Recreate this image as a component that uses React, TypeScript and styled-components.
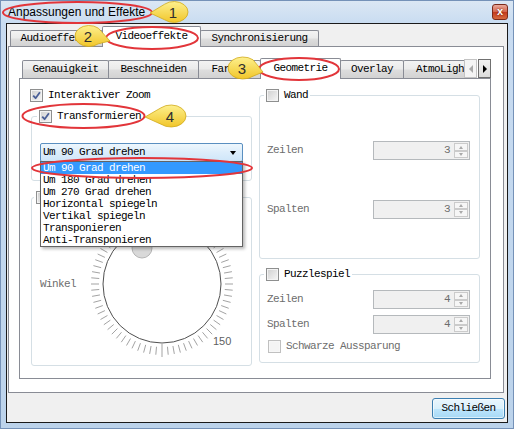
import React from 'react'
import styled, { createGlobalStyle, css } from 'styled-components'

const mono = `"Liberation Mono", "DejaVu Sans Mono", monospace`
const sans = `"Liberation Sans", Arial, sans-serif`

const edge = '#898c95'
const grayText = '#6d6d6d'

const monoText = css`
  font-family: ${mono};
  font-size: 11px;
  letter-spacing: -0.6px;
  line-height: 13px;
  white-space: nowrap;
`

const GlobalStyle = createGlobalStyle`
  html, body { margin: 0; padding: 0; background: #fff; }
  body { overflow: hidden; }
  * { box-sizing: border-box; }
`

const Window = styled.div`
  position: relative;
  width: 514px;
  height: 429px;
  border: 1px solid #7592b8;
  background: linear-gradient(180deg, #dbe7f4 0, #c9dcf1 22px, #bcd3eb 100%);
  padding: 0 5px 5px 5px;
  display: flex;
  flex-direction: column;
`

const TitleBar = styled.div`
  height: 22px;
  flex: none;
  display: flex;
  align-items: center;
  padding-left: 2px;
`

const Title = styled.span`
  font-family: ${sans};
  font-size: 12px;
  color: #000;
`

const CloseButton = styled.span`
  margin-left: auto;
  width: 16px;
  height: 16px;
  border: 1px solid #7a2a1a;
  border-radius: 3px;
  background: linear-gradient(#e9a99a, #d4644b 50%, #c2391d 51%, #d66a3e);
  color: #fff;
  font-family: ${sans};
  font-weight: bold;
  font-size: 11px;
  line-height: 13px;
  text-align: center;
  text-shadow: 0 0 2px #5a1000;
`

const Client = styled.div`
  flex: 1;
  border: 1px solid #1a1a1a;
  background: #f0f0f0;
  display: flex;
  flex-direction: column;
`

const TabWidget = styled.div<{ $margin: string }>`
  flex: 1;
  display: flex;
  flex-direction: column;
  margin: ${(p) => p.$margin};
`

const TabStrip = styled.div`
  position: relative;
  z-index: 1;
  height: 23px;
  margin-bottom: -1px;
  display: flex;
  align-items: flex-end;
`

const TabsViewport = styled.div<{ $pad: number }>`
  flex: 1;
  height: 100%;
  overflow: hidden;
  display: flex;
  align-items: flex-end;
  padding-left: ${(p) => p.$pad}px;
`

const Tab = styled.div<{ $active?: boolean; $w: number; $h: number }>`
  position: relative;
  flex: none;
  width: ${(p) => p.$w}px;
  height: ${(p) => p.$h}px;
  margin-bottom: ${(p) => (p.$active ? 0 : 1)}px;
  border: 1px solid ${edge};
  border-bottom: none;
  border-radius: 2px 2px 0 0;
  background: ${(p) =>
    p.$active
      ? '#fff'
      : 'linear-gradient(#f3f3f3, #ebebeb 45%, #dddddd 55%, #d2d2d2)'};
  z-index: ${(p) => (p.$active ? 2 : 1)};
  display: flex;
  align-items: center;
  justify-content: center;
  padding-bottom: ${(p) => (p.$active ? 2 : 0)}px;
  color: #000;
  ${monoText}

  & + & {
    margin-left: -1px;
  }
`

const Scroller = styled.div`
  flex: none;
  display: flex;
  gap: 1px;
  margin-bottom: 1px;
`

const ArrowButton = styled.span<{ $dir: 'left' | 'right'; $off?: boolean }>`
  width: 13px;
  height: 19px;
  border: 1px solid ${(p) => (p.$off ? '#c3c3c3' : '#707070')};
  background: ${(p) => (p.$off ? '#f4f4f4' : 'linear-gradient(#f2f2f2, #dcdcdc)')};
  display: flex;
  align-items: center;
  justify-content: center;

  &::after {
    content: '';
    border-top: 4px solid transparent;
    border-bottom: 4px solid transparent;
    ${(p) =>
      p.$dir === 'left'
        ? `border-right: 4px solid ${p.$off ? '#a8a8a8' : '#000'};`
        : `border-left: 4px solid ${p.$off ? '#a8a8a8' : '#000'};`}
  }
`

const TabPanel = styled.div<{ $pad: string }>`
  flex: 1;
  border: 1px solid ${edge};
  background: #fff;
  padding: ${(p) => p.$pad};
  display: flex;
  flex-direction: column;
`

const PageBody = styled.div`
  display: flex;
  gap: 7px;
  padding: 10px 10px 0 10px;
`

const Column = styled.div<{ $w: number }>`
  width: ${(p) => p.$w}px;
  flex: none;
  display: flex;
  flex-direction: column;
`

const CheckRow = styled.label<{ $shift?: number }>`
  display: flex;
  align-items: center;
  gap: 5px;
  height: 13px;
  margin-left: ${(p) => p.$shift ?? 0}px;
`

const Box = styled.span<{ $disabled?: boolean }>`
  flex: none;
  width: 13px;
  height: 13px;
  border: 1px solid ${(p) => (p.$disabled ? '#c0c0c0' : '#8e8f8f')};
  background: ${(p) =>
    p.$disabled ? '#f4f4f4' : 'linear-gradient(135deg, #cfcfcf, #f6f6f6)'};
  box-shadow: inset 0 0 0 1px ${(p) => (p.$disabled ? '#f7f7f7' : '#f3f3f3')};
  display: flex;
  align-items: center;
  justify-content: center;
`

const Text = styled.span<{ $disabled?: boolean }>`
  color: ${(p) => (p.$disabled ? grayText : '#000')};
  ${monoText}
`

const GroupBox = styled.fieldset<{ $top?: number; $left?: number }>`
  margin: ${(p) => p.$top ?? 0}px 0 0 ${(p) => p.$left ?? 0}px;
  padding: 0;
  min-width: 0;
  border: 1px solid #d5dfe5;
  border-radius: 3px;
`

const Legend = styled.legend<{ $indent: number }>`
  margin-left: ${(p) => p.$indent}px;
  padding: 0 2px;
`

const TransformBody = styled.div`
  padding: 20px 8px 18px 8px;
`

const ComboWrap = styled.div`
  position: relative;
`

const Combo = styled.div`
  height: 19px;
  border: 1px solid #5a8fc0;
  border-radius: 2px;
  background: linear-gradient(#eef7fd, #dcedfb 50%, #cfe6f9);
  display: flex;
  align-items: center;
  padding: 0 6px 0 2px;
  ${monoText}

  &::after {
    content: '';
    margin-left: auto;
    border-top: 4px solid #000;
    border-left: 3.5px solid transparent;
    border-right: 3.5px solid transparent;
  }
`

const Popup = styled.ul`
  position: absolute;
  top: 18px;
  left: 0;
  width: 203px;
  margin: 0;
  padding: 0;
  list-style: none;
  border: 1px solid #646464;
  background: #fff;
  box-shadow: 2px 2px 3px rgba(0, 0, 0, 0.28);
  z-index: 10;
`

const PopupItem = styled.li<{ $selected?: boolean }>`
  height: 12px;
  padding-left: 2px;
  ${monoText}
  line-height: 12px;
  background: ${(p) => (p.$selected ? '#3399ff' : 'transparent')};
  color: ${(p) => (p.$selected ? '#fff' : '#000')};
`

const DialBody = styled.div`
  display: flex;
  align-items: center;
  padding: 5px 0 6px 8px;
`

const DialLabel = styled(Text)`
  width: 47px;
  flex: none;
`

const WallBody = styled.div`
  height: 156px;
  display: flex;
  flex-direction: column;
  justify-content: space-evenly;
  padding: 0 9px 0 7px;
`

const PuzzleBody = styled.div`
  display: flex;
  flex-direction: column;
  gap: 6px;
  padding: 9px 9px 9px 7px;
`

const SpinRow = styled.div`
  height: 19px;
  display: flex;
  align-items: center;
  justify-content: space-between;
`

const SpinBox = styled.div`
  width: 97px;
  height: 19px;
  border: 1px solid #b5b9bc;
  background: #f0f0f0;
  display: flex;
`

const SpinValue = styled.span`
  flex: 1;
  text-align: right;
  padding-right: 4px;
  color: ${grayText};
  ${monoText}
  line-height: 17px;
`

const SpinButtons = styled.div`
  width: 15px;
  flex: none;
  display: flex;
  flex-direction: column;
  padding: 1px 1px 1px 0;
`

const SpinButton = styled.span<{ $up?: boolean }>`
  flex: 1;
  border: 1px solid #cbcbcb;
  background: #f6f6f6;
  display: flex;
  align-items: center;
  justify-content: center;

  &::after {
    content: '';
    border-left: 2.5px solid transparent;
    border-right: 2.5px solid transparent;
    ${(p) =>
      p.$up ? 'border-bottom: 3px solid #a9a9a9;' : 'border-top: 3px solid #a9a9a9;'}
  }
`

const ButtonBar = styled.div`
  height: 29px;
  flex: none;
  display: flex;
  justify-content: flex-end;
  align-items: flex-start;
  padding: 5px 2px 0 0;
`

const PushButton = styled.button`
  width: 73px;
  height: 21px;
  padding: 0;
  border: 1px solid #3c7fb1;
  border-radius: 3px;
  background: linear-gradient(#eaf6fd, #d9f0fc 50%, #bee6fd 51%, #a7d9f5);
  box-shadow: inset 0 0 0 1px rgba(255, 255, 255, 0.6);
  color: #000;
  ${monoText}
`

const Annotations = styled.svg`
  position: absolute;
  top: -1px;
  left: -1px;
  z-index: 20;
  pointer-events: none;
`

const CheckMark = () => (
  <svg width="9" height="9" viewBox="0 0 9 9">
    <path
      d="M1.2 4.6 L3.6 7.2 L7.9 1.3"
      fill="none"
      stroke="#4a5f97"
      strokeWidth="1.8"
      strokeLinejoin="round"
    />
  </svg>
)

type CheckProps = {
  checked?: boolean
  disabled?: boolean
  shift?: number
  children: React.ReactNode
}

const Check: React.FC<CheckProps> = ({ checked, disabled, shift, children }) => (
  <CheckRow $shift={shift}>
    <Box $disabled={disabled}>{checked && <CheckMark />}</Box>
    <Text $disabled={disabled}>{children}</Text>
  </CheckRow>
)

const Spin: React.FC<{ label: string; value: number }> = ({ label, value }) => (
  <SpinRow>
    <Text $disabled>{label}</Text>
    <SpinBox>
      <SpinValue>{value}</SpinValue>
      <SpinButtons>
        <SpinButton $up />
        <SpinButton />
      </SpinButtons>
    </SpinBox>
  </SpinRow>
)

const Dial: React.FC = () => {
  const c = 75
  const ticks = Array.from({ length: 72 }, (_, i) => {
    const a = (i * 5 * Math.PI) / 180
    const major = i % 36 === 0
    const r1 = major ? 60 : 63
    const r2 = major ? 73 : 71
    return (
      <line
        key={i}
        x1={c + r1 * Math.sin(a)}
        y1={c + r1 * Math.cos(a)}
        x2={c + r2 * Math.sin(a)}
        y2={c + r2 * Math.cos(a)}
      />
    )
  })

  return (
    <svg width="150" height="150" viewBox="0 0 150 150">
      <g stroke="#a3a3a3" strokeWidth="1">{ticks}</g>
      <circle cx={c} cy={c} r="59" fill="#fff" stroke="#505050" />
      <circle cx="55" cy="39" r="10" fill="#d9d9d9" stroke="#b5b5b5" />
      <text x="126" y="136" fontFamily={sans} fontSize="11" fill="#5f5f5f">
        150
      </text>
    </svg>
  )
}

const calloutPath = (
  cx: number,
  cy: number,
  rx: number,
  ry: number,
  tx: number,
  ty: number,
  side: 'left' | 'right'
) => {
  const pt = (deg: number) => [
    cx + rx * Math.cos((deg * Math.PI) / 180),
    cy + ry * Math.sin((deg * Math.PI) / 180),
  ]
  if (side === 'left') {
    const [ax, ay] = pt(228)
    const [bx, by] = pt(132)
    return `M${tx} ${ty} L${ax} ${ay} A${rx} ${ry} 0 1 1 ${bx} ${by} Z`
  }
  const [ax, ay] = pt(312)
  const [bx, by] = pt(48)
  return `M${tx} ${ty} L${ax} ${ay} A${rx} ${ry} 0 1 0 ${bx} ${by} Z`
}

const rings = [
  { cx: 77.5, cy: 12.5, rx: 74.5, ry: 10.5 },
  { cx: 152, cy: 38, rx: 46, ry: 11 },
  { cx: 299, cy: 69, rx: 40, ry: 11 },
  { cx: 83.5, cy: 116, rx: 61, ry: 12 },
  { cx: 142, cy: 168, rx: 110, ry: 10 },
]

const callouts = [
  { n: 1, cx: 174, cy: 12, rx: 14, ry: 10.5, tx: 150, ty: 13, side: 'left' as const },
  { n: 2, cx: 89, cy: 36, rx: 14, ry: 10.5, tx: 110, ty: 41, side: 'right' as const },
  { n: 3, cx: 243, cy: 68, rx: 15, ry: 11, tx: 263, ty: 72, side: 'right' as const },
  { n: 4, cx: 171, cy: 116, rx: 15, ry: 11, tx: 145, ty: 117, side: 'left' as const },
]

const options = [
  'Um 90 Grad drehen',
  'Um 180 Grad drehen',
  'Um 270 Grad drehen',
  'Horizontal spiegeln',
  'Vertikal spiegeln',
  'Transponieren',
  'Anti-Transponieren',
]

const App: React.FC = () => (
  <>
    <GlobalStyle />
    <Window>
      <TitleBar>
        <Title>Anpassungen und Effekte</Title>
        <CloseButton>x</CloseButton>
      </TitleBar>
      <Client>
        <TabWidget $margin="0 3px 0 1px">
          <TabStrip>
            <TabsViewport $pad={2}>
              <Tab $w={93} $h={16}>Audioeffekte</Tab>
              <Tab $w={99} $h={21} $active>Videoeffekte</Tab>
              <Tab $w={119} $h={16}>Synchronisierung</Tab>
            </TabsViewport>
          </TabStrip>
          <TabPanel $pad="9px 12px 13px 10px">
            <TabWidget $margin="0">
              <TabStrip>
                <TabsViewport $pad={3}>
                  <Tab $w={87} $h={18}>Genauigkeit</Tab>
                  <Tab $w={91} $h={18}>Beschneiden</Tab>
                  <Tab $w={63} $h={18}>Farben</Tab>
                  <Tab $w={81} $h={21} $active>Geometrie</Tab>
                  <Tab $w={64} $h={18}>Overlay</Tab>
                  <Tab $w={80} $h={18}>AtmoLight</Tab>
                </TabsViewport>
                <Scroller>
                  <ArrowButton $dir="left" $off />
                  <ArrowButton $dir="right" />
                </Scroller>
              </TabStrip>
              <TabPanel $pad="0">
                <PageBody>
                  <Column $w={222}>
                    <Check checked>Interaktiver Zoom</Check>
                    <GroupBox $top={8} $left={1}>
                      <Legend $indent={5}>
                        <Check checked>Transformieren</Check>
                      </Legend>
                      <TransformBody>
                        <ComboWrap>
                          <Combo>Um 90 Grad drehen</Combo>
                          <Popup>
                            {options.map((o, i) => (
                              <PopupItem key={o} $selected={i === 0}>
                                {o}
                              </PopupItem>
                            ))}
                          </Popup>
                        </ComboWrap>
                      </TransformBody>
                    </GroupBox>
                    <GroupBox $top={10} $left={1}>
                      <Legend $indent={2}>
                        <Check>Drehen</Check>
                      </Legend>
                      <DialBody>
                        <DialLabel $disabled>Winkel</DialLabel>
                        <Dial />
                      </DialBody>
                    </GroupBox>
                  </Column>
                  <Column $w={221}>
                    <GroupBox>
                      <Legend $indent={4}>
                        <Check>Wand</Check>
                      </Legend>
                      <WallBody>
                        <Spin label="Zeilen" value={3} />
                        <Spin label="Spalten" value={3} />
                      </WallBody>
                    </GroupBox>
                    <GroupBox $top={9}>
                      <Legend $indent={4}>
                        <Check>Puzzlespiel</Check>
                      </Legend>
                      <PuzzleBody>
                        <Spin label="Zeilen" value={4} />
                        <Spin label="Spalten" value={4} />
                        <Check disabled shift={1}>
                          Schwarze Aussparung
                        </Check>
                      </PuzzleBody>
                    </GroupBox>
                  </Column>
                </PageBody>
              </TabPanel>
            </TabWidget>
          </TabPanel>
        </TabWidget>
        <ButtonBar>
          <PushButton>Schließen</PushButton>
        </ButtonBar>
      </Client>
      <Annotations width="514" height="429" viewBox="0 0 514 429">
        <defs>
          <linearGradient id="note" x1="0" y1="0" x2="0" y2="1">
            <stop offset="0" stopColor="#fdf08e" />
            <stop offset="1" stopColor="#f1c62a" />
          </linearGradient>
        </defs>
        {rings.map((r, i) => (
          <ellipse
            key={i}
            cx={r.cx}
            cy={r.cy}
            rx={r.rx}
            ry={r.ry}
            fill="none"
            stroke="#e2353a"
            strokeWidth="2"
          />
        ))}
        {callouts.map((c) => (
          <g key={c.n}>
            <path
              d={calloutPath(c.cx, c.cy, c.rx, c.ry, c.tx, c.ty, c.side)}
              fill="url(#note)"
              stroke="#d1a91c"
              strokeWidth="0.8"
            />
            <text
              x={c.cx - 1}
              y={c.cy + 5.5}
              textAnchor="middle"
              fontFamily={sans}
              fontSize="15"
              fill="#2f2f2f"
            >
              {c.n}
            </text>
          </g>
        ))}
      </Annotations>
    </Window>
  </>
)

export default App
